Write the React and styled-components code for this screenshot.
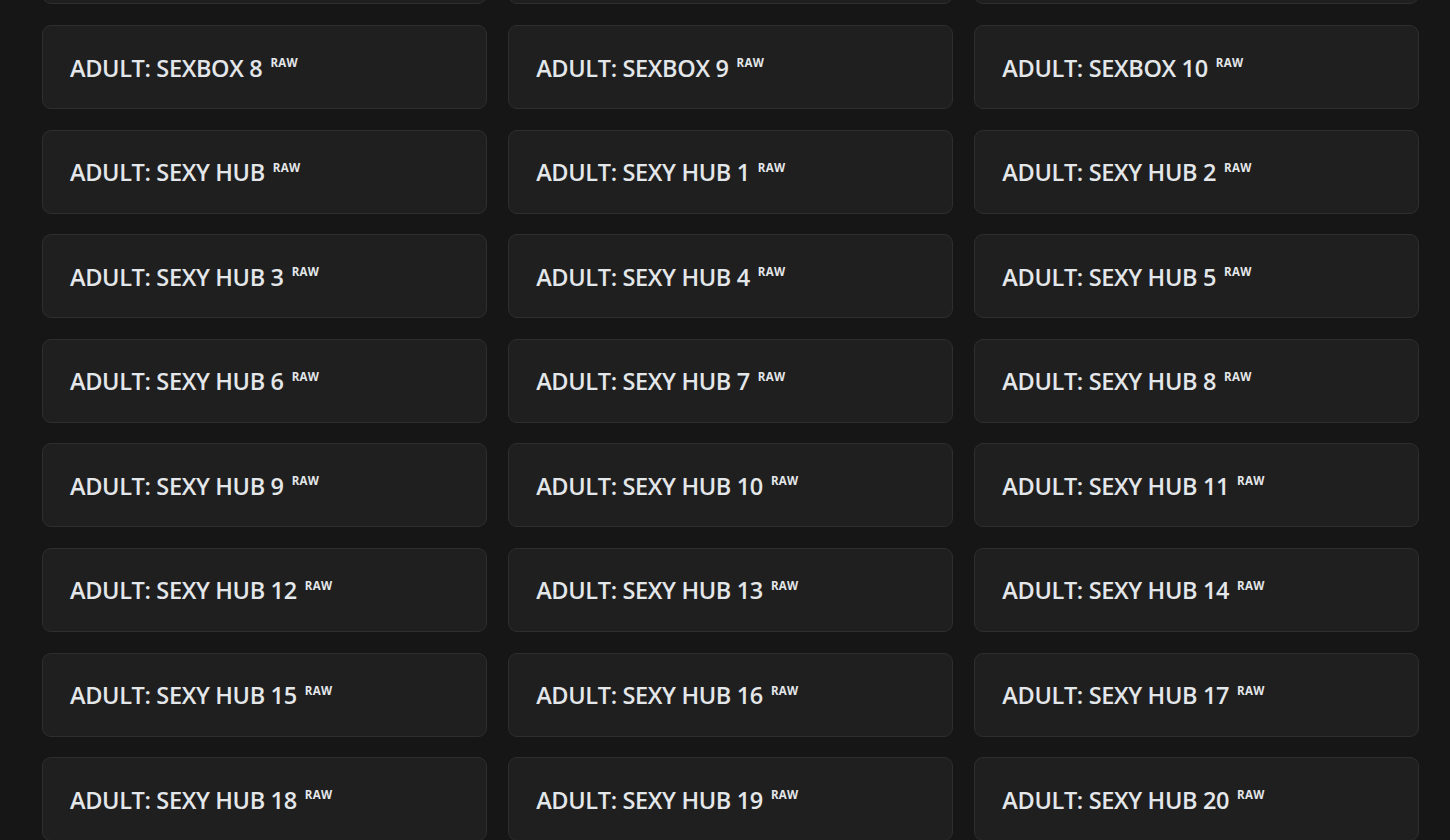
import React from 'react';
import styled, { createGlobalStyle } from 'styled-components';

const GlobalStyle = createGlobalStyle`
  html, body {
    margin: 0;
    padding: 0;
    background: #161616;
    overflow: hidden;
  }
  body {
    font-family: "Open Sans", "Noto Sans", "Liberation Sans", sans-serif;
    -webkit-font-smoothing: antialiased;
  }
`;

const Page = styled.main`
  padding: 0 31px 0 42px;
`;

// the list is scrolled down a little, so the first row sits above the fold
const ChannelGrid = styled.ul`
  list-style: none;
  margin: -79.6px 0 0;
  padding: 0;
  display: grid;
  grid-template-columns: repeat(3, 1fr);
  column-gap: 21.5px;
  row-gap: 20.6px;
`;

const ChannelCard = styled.li`
  height: 84px;
  box-sizing: border-box;
  display: flex;
  align-items: center;
  padding: 1px 27px 0;
  background: #1f1f1f;
  border: 1px solid #2e2e2e;
  border-radius: 9px;
  cursor: pointer;
  &:hover {
    background: #252525;
  }
`;

const ChannelName = styled.span`
  color: #e4e7ea;
  font-size: 23.5px;
  font-weight: 600;
  letter-spacing: -0.35px;
  white-space: nowrap;
`;

const Tag = styled.span`
  font-size: 11.5px;
  font-weight: 700;
  margin-left: 8px;
  vertical-align: 9.5px;
  letter-spacing: 0.3px;
`;

const channels = [
  'ADULT: SEXBOX 5',
  'ADULT: SEXBOX 6',
  'ADULT: SEXBOX 7',
  'ADULT: SEXBOX 8',
  'ADULT: SEXBOX 9',
  'ADULT: SEXBOX 10',
  'ADULT: SEXY HUB',
  ...Array.from({ length: 20 }, (_, i) => `ADULT: SEXY HUB ${i + 1}`),
];

const App = () => (
  <>
    <GlobalStyle />
    <Page>
      <ChannelGrid>
        {channels.map((name) => (
          <ChannelCard key={name}>
            <ChannelName>
              {name}
              <Tag>RAW</Tag>
            </ChannelName>
          </ChannelCard>
        ))}
      </ChannelGrid>
    </Page>
  </>
);

export default App;
